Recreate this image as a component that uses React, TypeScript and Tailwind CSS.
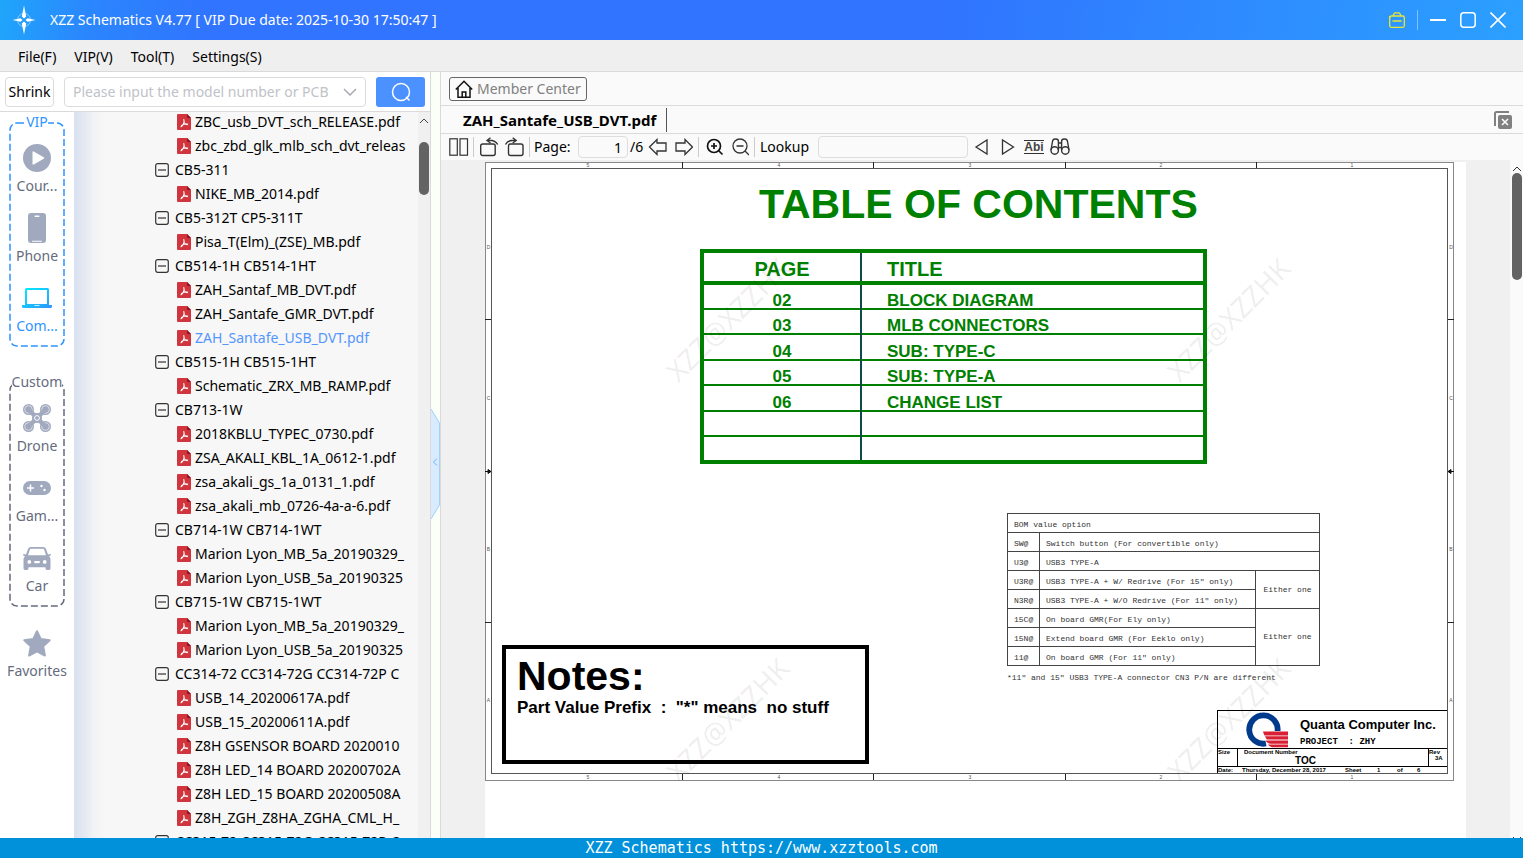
import { useState } from 'react';
import type { ReactNode } from 'react';
import clsx from 'clsx';

interface TreeFile {
  name: string;
}

interface TreeFolder {
  name: string;
  files: TreeFile[];
}

const toFiles = (...names: string[]): TreeFile[] => names.map((name) => ({ name }));

// the first folder is scrolled out of view, only its files are listed
const topFiles = toFiles('ZBC_usb_DVT_sch_RELEASE.pdf', 'zbc_zbd_glk_mlb_sch_dvt_releas');

const folders: TreeFolder[] = [
  { name: 'CB5-311', files: toFiles('NIKE_MB_2014.pdf') },
  { name: 'CB5-312T CP5-311T', files: toFiles('Pisa_T(Elm)_(ZSE)_MB.pdf') },
  {
    name: 'CB514-1H CB514-1HT',
    files: toFiles('ZAH_Santaf_MB_DVT.pdf', 'ZAH_Santafe_GMR_DVT.pdf', 'ZAH_Santafe_USB_DVT.pdf'),
  },
  { name: 'CB515-1H CB515-1HT', files: toFiles('Schematic_ZRX_MB_RAMP.pdf') },
  {
    name: 'CB713-1W',
    files: toFiles(
      '2018KBLU_TYPEC_0730.pdf',
      'ZSA_AKALI_KBL_1A_0612-1.pdf',
      'zsa_akali_gs_1a_0131_1.pdf',
      'zsa_akali_mb_0726-4a-a-6.pdf',
    ),
  },
  {
    name: 'CB714-1W CB714-1WT',
    files: toFiles('Marion Lyon_MB_5a_20190329_', 'Marion Lyon_USB_5a_20190325'),
  },
  {
    name: 'CB715-1W CB715-1WT',
    files: toFiles('Marion Lyon_MB_5a_20190329_', 'Marion Lyon_USB_5a_20190325'),
  },
  {
    name: 'CC314-72 CC314-72G CC314-72P C',
    files: toFiles(
      'USB_14_20200617A.pdf',
      'USB_15_20200611A.pdf',
      'Z8H GSENSOR BOARD 2020010',
      'Z8H LED_14 BOARD 20200702A',
      'Z8H LED_15 BOARD 20200508A',
      'Z8H_ZGH_Z8HA_ZGHA_CML_H_',
    ),
  },
  { name: 'CC315-72 CC315-72G CC315-72P C', files: [] },
];

const tocRows = [
  ['02', 'BLOCK DIAGRAM'],
  ['03', 'MLB CONNECTORS'],
  ['04', 'SUB: TYPE-C'],
  ['05', 'SUB: TYPE-A'],
  ['06', 'CHANGE LIST'],
  ['', ''],
  ['', ''],
];

const bomRows = [
  { code: 'SW@', text: 'Switch button (For convertible only)', wide: true },
  { code: 'U3@', text: 'USB3 TYPE-A', wide: true },
  { code: 'U3R@', text: 'USB3 TYPE-A + W/ Redrive (For 15" only)', span: 2 },
  { code: 'N3R@', text: 'USB3 TYPE-A + W/O Redrive (For 11" only)' },
  { code: '15C@', text: 'On board GMR(For Ely only)', span: 3 },
  { code: '15N@', text: 'Extend board GMR (For Eeklo only)' },
  { code: '11@', text: 'On board GMR (For 11" only)' },
];

/* ---------- icons ---------- */

function AppLogo() {
  return (
    <svg width="24" height="30" viewBox="0 0 24 30" fill="#fff">
      <circle cx="12" cy="15" r="6.5" fill="none" stroke="#fff" strokeOpacity=".45" />
      <path d="M12 0.5 14.2 11.5 12 13.5 9.8 11.5Z" />
      <path d="M12 29.5 14.2 18.5 12 16.5 9.8 18.5Z" />
      <path d="M0.5 15 8.5 13.3 10.5 15 8.5 16.7Z" />
      <path d="M23.5 15 15.5 13.3 13.5 15 15.5 16.7Z" />
    </svg>
  );
}

function PdfIcon() {
  return (
    <svg width="14" height="16" viewBox="0 0 14 16" className="shrink-0">
      <path d="M1 0h9l4 4v11a1 1 0 0 1-1 1H1a1 1 0 0 1-1-1V1a1 1 0 0 1 1-1Z" fill="#d0343d" />
      <path d="M10 0v3a1 1 0 0 0 1 1h3Z" fill="#8f1119" />
      <path
        d="M6.800 5.500c.6 1.500.3 3.200-.4 4.500-.7 1.300-1.500 2.300-2.400 2.700M4.500 11.500c1.500-1 4-1.700 6.200-1.500M6.900 8.200c.8 1.200 1.800 2.200 3.300 2.600"
        fill="none"
        stroke="#fff"
        strokeWidth="1.100"
        strokeLinecap="round"
      />
    </svg>
  );
}

function CourseIcon() {
  return (
    <svg width="28" height="28" viewBox="0 0 28 28">
      <circle cx="14" cy="14" r="14" fill="#a1a9bf" />
      <path d="M9.500 8.200v11.600c0 .8.500 1.200 1.200.8l10-5.800c.6-.4.6-1.200 0-1.600l-10-5.800c-.7-.4-1.200 0-1.200.8Z" fill="#fff" />
    </svg>
  );
}

function PhoneIcon() {
  return (
    <svg width="18" height="30" viewBox="0 0 18 30">
      <rect width="18" height="30" rx="3" fill="#a1a9bf" />
      <rect x="6.500" y="2.500" width="5" height="1.500" rx=".7" fill="#fff" />
      <rect x="4" y="27.700" width="10" height="1" rx=".5" fill="#fff" />
    </svg>
  );
}

function ComputerIcon() {
  return (
    <svg width="30" height="20" viewBox="0 0 30 20">
      <defs>
        <linearGradient id="screen" x1="0" x2="1" y1="0" y2="1">
          <stop offset="0" stopColor="#00efff" />
          <stop offset="1" stopColor="#2e94ff" />
        </linearGradient>
      </defs>
      <path
        fillRule="evenodd"
        fill="url(#screen)"
        d="M4.500 0h21A1.500 1.500 0 0 1 27 1.500V17h3v1.500c0 1-1 1.500-1.500 1.500h-27C1 20 0 19.500 0 18.500V17h3V1.500A1.500 1.500 0 0 1 4.500 0ZM5 2v14h20V2Z"
      />
      <rect x="12.500" y="17" width="5" height="1" fill="#bdf3ff" />
    </svg>
  );
}

function DroneIcon() {
  const rotors = [
    [5.5, 5.5],
    [22.5, 5.5],
    [5.5, 22.5],
    [22.5, 22.5],
  ];
  return (
    <svg width="28" height="28" viewBox="0 0 28 28">
      {rotors.map(([cx, cy]) => (
        <g key={`${cx}-${cy}`}>
          <circle cx={cx} cy={cy} r="5.500" fill="#a1a9bf" />
          <circle cx={cx} cy={cy} r="3.800" fill="none" stroke="#fff" strokeWidth=".7" strokeOpacity=".8" />
        </g>
      ))}
      <path d="M6 6 22 22M22 6 6 22" stroke="#a1a9bf" strokeWidth="4.500" strokeLinecap="round" />
      <circle cx="14" cy="14" r="5" fill="#a1a9bf" />
      <circle cx="14" cy="14" r="2.400" fill="none" stroke="#fff" strokeWidth="1" />
    </svg>
  );
}

function GameIcon() {
  return (
    <svg width="28" height="14" viewBox="0 0 28 14">
      <rect width="28" height="14" rx="7" fill="#a1a9bf" />
      <path d="M7.500 3.500v7M4 7h7" stroke="#fff" strokeWidth="1.500" />
      <circle cx="18.500" cy="5" r="1.200" fill="#fff" />
      <circle cx="21.500" cy="9" r="1.200" fill="#fff" />
    </svg>
  );
}

function CarIcon() {
  return (
    <svg width="28" height="23" viewBox="0 0 28 23">
      <path
        fillRule="evenodd"
        fill="#a1a9bf"
        d="M8 0h12c1.500 0 2.500.8 3 2l2 5.500L27.300 7c.7 0 .9 1.300.2 1.600l-1.500.6c1 1 1.500 2 1.500 3.300V21c0 1-.5 2-1.500 2h-2c-1 0-1.500-.8-1.500-2v-.8h-17V21c0 1.200-.5 2-1.500 2H2c-1 0-1.500-1-1.500-2v-8.500C.5 11.200 1 10.200 2 9.200l-1.500-.6C-.2 8.300 0 7 .7 7L3 7.500 5 2c.5-1.200 1.500-2 3-2Zm.2 1.800c-.8 0-1.200.4-1.500 1.200L5 8.300h18L21.300 3c-.3-.8-.7-1.200-1.500-1.200ZM6.300 13a1.900 1.900 0 1 0 0 3.800 1.900 1.900 0 0 0 0-3.800Zm15.400 0a1.900 1.900 0 1 0 0 3.800 1.900 1.900 0 0 0 0-3.800ZM12 14c-1.200 0-1.200 2.200 0 2.200h4c1.200 0 1.200-2.200 0-2.200Z"
      />
    </svg>
  );
}

function StarIcon() {
  return (
    <svg width="28" height="27" viewBox="0 0 28 27">
      <path
        d="M14 1.200 17.700 8.900 26.700 10.200 20.200 16.200 21.900 25.500 14 21.400 6.100 25.500 7.800 16.200 1.300 10.200 10.300 8.900Z"
        fill="#a1a9bf"
        stroke="#a1a9bf"
        strokeWidth="2"
        strokeLinejoin="round"
      />
    </svg>
  );
}

function QuantaLogo() {
  return (
    <svg width="42" height="36" viewBox="0 0 42 36" className="shrink-0">
      <path d="M31.500 19.500A14.200 14.200 0 1 0 20 31.500" fill="none" stroke="#003a8c" strokeWidth="5.800" />
      <path d="M16 19h27v17H24Z" fill="#fff" />
      <path
        d="M17 19.500h25v4H18.500C17.800 22 17.300 21 17 19.500ZM19 24.300h23v3.200H21C20 26.500 19.500 25.500 19 24.300ZM19.500 28.500H42v3.200H24.500c-2 0-4-1.500-5-3.200ZM22 32.500h20v2.800H26c-1.500-.5-3-1.500-4-2.800Z"
        fill="#d81f33"
      />
    </svg>
  );
}

/* ---------- title bar and menu ---------- */

function TitleBar() {
  return (
    <header className="flex h-10 shrink-0 items-center bg-[linear-gradient(100deg,#1fa6fb_0%,#2b86fd_6%,#3074ff_14%,#3074ff_62%,#2e8cff_82%,#2ba0ff_100%)] pl-3 pr-[17px] text-white">
      <AppLogo />
      <h1 className="ml-3.5 text-sm leading-[22px]">XZZ Schematics V4.77 [ VIP Due date: 2025-10-30 17:50:47 ]</h1>
      <div className="ml-auto flex items-center">
        <button type="button" aria-label="Toolbox">
          <svg width="16" height="16" viewBox="0 0 16 16" fill="none" stroke="#e9e337" strokeWidth="1.300">
            <rect x=".7" y="4" width="14.600" height="11.300" rx="1.500" />
            <path d="M.7 7V4M4 4 5 1.700c.2-.6.600-.9 1.200-.9h3.600c.6 0 1 .3 1.200.9L12 4M3.500 9h9" />
          </svg>
        </button>
        <span className="mx-3 h-5 w-px bg-white/40" />
        <button type="button" aria-label="Minimize">
          <svg width="16" height="16" stroke="#fff" strokeWidth="2">
            <path d="M0 8h16" />
          </svg>
        </button>
        <button type="button" aria-label="Maximize" className="ml-3.5">
          <svg width="16" height="16" fill="none" stroke="#fff" strokeWidth="1.500">
            <rect x=".8" y=".8" width="14.400" height="14.400" rx="3" />
          </svg>
        </button>
        <button type="button" aria-label="Close" className="ml-3.5">
          <svg width="16" height="16" stroke="#fff" strokeWidth="1.600">
            <path d="M.5.5l15 15M15.500.5l-15 15" />
          </svg>
        </button>
      </div>
    </header>
  );
}

function MenuBar() {
  return (
    <nav className="flex h-8 shrink-0 items-center gap-[18px] border-b border-[#dadada] bg-[#efefef] px-[18px] pt-0.5 text-sm">
      {['File(F)', 'VIP(V)', 'Tool(T)', 'Settings(S)'].map((label) => (
        <button key={label} type="button">
          {label}
        </button>
      ))}
    </nav>
  );
}

/* ---------- left panel ---------- */

function SearchRow() {
  return (
    <form className="flex h-10 shrink-0 items-center border-b border-[#dadada] bg-white px-[5px] text-sm">
      <button type="button" className="h-[30px] w-[49px] rounded border border-[#dcdcdc] bg-white">
        Shrink
      </button>
      <div className="ml-2.5 flex h-[30px] min-w-0 flex-1 items-center rounded border border-[#dcdcdc] bg-white px-2">
        <input
          type="text"
          aria-label="Model number or PCB number"
          placeholder="Please input the model number or PCB"
          className="min-w-0 flex-1 outline-none placeholder:text-[#bfc2c9]"
        />
        <button type="button" aria-label="Show history" className="ml-1.5">
          <svg width="14" height="8" fill="none" stroke="#a8abb2" strokeWidth="1.500">
            <path d="M1 1l6 6 6-6" />
          </svg>
        </button>
      </div>
      <button
        type="submit"
        aria-label="Search"
        className="ml-2.5 flex h-[30px] w-[49px] items-center justify-center rounded-[3px] bg-[#4b91ff]"
      >
        <svg width="20" height="20" fill="none" stroke="#fff" strokeWidth="1.500">
          <circle cx="10" cy="10" r="8.500" />
          <path d="M15 15l3.500 3.500" />
        </svg>
      </button>
    </form>
  );
}

interface RailItemProps {
  icon: ReactNode;
  label: string;
  active?: boolean;
}

function RailItem({ icon, label, active }: RailItemProps) {
  return (
    <button type="button" className={clsx('flex h-[70px] w-full flex-col items-center', active ? 'text-[#2e94ff]' : 'text-[#666b7d]')}>
      <span className="flex h-10 items-center">{icon}</span>
      <span className="whitespace-nowrap leading-4">{label}</span>
    </button>
  );
}

function RailGroup({ label, color, children }: { label: string; color: string; children: ReactNode }) {
  return (
    <section className="relative h-[225px] w-14 pt-4" style={{ color }}>
      <svg width="100%" height="100%" className="absolute inset-0 overflow-visible" fill="none">
        <rect x="1" y="1" width="54" height="223" rx="7" stroke={color} strokeWidth="1.500" strokeDasharray="7 3" />
      </svg>
      <h2 className="absolute inset-x-0 -top-2 flex justify-center leading-4">
        <span className="whitespace-nowrap bg-white">{label}</span>
      </h2>
      <div className="relative">{children}</div>
    </section>
  );
}

function Rail() {
  return (
    <aside className="flex w-[74px] shrink-0 flex-col items-center bg-white pt-2.5 text-sm">
      <RailGroup label="VIP" color="#2e94ff">
        <RailItem icon={<CourseIcon />} label="Cour..." />
        <RailItem icon={<PhoneIcon />} label="Phone" />
        <RailItem icon={<ComputerIcon />} label="Com..." active />
      </RailGroup>
      <div className="h-[35px] shrink-0" />
      <RailGroup label="Custom" color="#666b7d">
        <RailItem icon={<DroneIcon />} label="Drone" />
        <RailItem icon={<GameIcon />} label="Gam..." />
        <RailItem icon={<CarIcon />} label="Car" />
      </RailGroup>
      <div className="mt-4 w-full">
        <RailItem icon={<StarIcon />} label="Favorites" />
      </div>
    </aside>
  );
}

function FileRow({ file, selected, onSelect }: { file: TreeFile; selected: boolean; onSelect: (name: string) => void }) {
  return (
    <li className="pl-[22px]">
      <button
        type="button"
        onClick={() => onSelect(file.name)}
        className={clsx('flex h-6 items-center gap-1 whitespace-nowrap', selected && 'text-[#5496ff]')}
      >
        <PdfIcon />
        {file.name}
      </button>
    </li>
  );
}

function FileTree() {
  const [selected, setSelected] = useState('ZAH_Santafe_USB_DVT.pdf');

  return (
    <div className="min-w-0 flex-1 overflow-hidden bg-[linear-gradient(90deg,#d9e1f0_0px,#e4e8f1_10px,#f2f3f5_20px,#f7f7f7_32px)] pl-[81px] text-sm leading-[22px]">
      <ul className="-mt-0.5">
        {topFiles.map((file) => (
          <FileRow key={file.name} file={file} selected={file.name === selected} onSelect={setSelected} />
        ))}
        {folders.map((folder) => (
          <li key={folder.name}>
            <button type="button" className="flex h-6 items-center gap-1.5 whitespace-nowrap">
              <svg width="14" height="14" fill="none" stroke="#333" className="shrink-0">
                <rect x=".7" y=".7" width="12.600" height="12.600" rx="2" strokeWidth="1.200" />
                <path d="M3 7h8" strokeWidth="1.200" />
              </svg>
              {folder.name}
            </button>
            <ul>
              {folder.files.map((file) => (
                <FileRow key={file.name} file={file} selected={file.name === selected} onSelect={setSelected} />
              ))}
            </ul>
          </li>
        ))}
      </ul>
    </div>
  );
}

function LeftPanel() {
  return (
    <div className="flex w-[430px] shrink-0 flex-col">
      <SearchRow />
      <div className="flex min-h-0 flex-1">
        <Rail />
        <FileTree />
        <div className="flex w-3 shrink-0 flex-col items-center bg-[#f0f0f0] pt-1.5">
          <svg width="10" height="6" fill="none" stroke="#444">
            <path d="M1 5l4-4 4 4" />
          </svg>
          <span className="mt-[18px] h-[53px] w-2.5 rounded-full bg-[#636363]" />
        </div>
      </div>
    </div>
  );
}

function Splitter() {
  return (
    <div className="flex w-[11px] shrink-0 items-center border-x border-[#dadada] bg-[#fafff8]">
      <button type="button" aria-label="Collapse panel" className="mt-[18px]">
        <svg width="9" height="110" fill="none">
          <path d="M0 0 9 14v82L0 110Z" fill="#d8ebff" />
          <path d="M0 0 8.500 14v82L0 110" stroke="#a5d0fa" />
          <path d="M6 49.500l-3.500 3.500 3.500 3.500" stroke="#6fb6f5" />
        </svg>
      </button>
    </div>
  );
}

/* ---------- viewer ---------- */

function ToolButton({ label, children }: { label: string; children: ReactNode }) {
  return (
    <button type="button" aria-label={label} title={label} className="shrink-0">
      {children}
    </button>
  );
}

const Divider = () => <span className="h-5 w-px shrink-0 bg-[#ccc]" />;

function Toolbar() {
  const [page, setPage] = useState('1');

  return (
    <div className="flex h-[26px] shrink-0 items-center bg-[#fafafa] pl-2 text-sm">
      <ToolButton label="Two pages">
        <svg width="20" height="18" fill="none" stroke="#333" strokeWidth="1.200">
          <rect x=".8" y=".8" width="7.500" height="16.400" />
          <rect x="11" y=".8" width="7.500" height="16.400" />
        </svg>
      </ToolButton>
      <div className="flex items-center gap-[5px] pl-1">
        <Divider />
        <ToolButton label="Rotate left">
          <svg width="20" height="20" fill="none" stroke="#333" strokeWidth="1.400">
            <rect x="1.700" y="7" width="14.500" height="11.500" rx="2" />
            <path d="M18.700 7.500c-1.500-3-5-4.700-10.500-4.200M11.500.7 8 3.400l3.500 2.600" />
          </svg>
        </ToolButton>
        <ToolButton label="Rotate right">
          <svg width="20" height="20" fill="none" stroke="#333" strokeWidth="1.400">
            <rect x="4.500" y="7" width="14.500" height="11.500" rx="2" />
            <path d="M1.500 7.500c1.500-3 5-4.700 10.500-4.200M8.700.7l3.500 2.700L8.700 6" />
          </svg>
        </ToolButton>
        <Divider />
      </div>
      <label htmlFor="page" className="w-12 pl-1">
        Page:
      </label>
      <input
        id="page"
        value={page}
        onChange={(e) => setPage(e.target.value)}
        className="h-[22px] w-[50px] rounded-sm border border-[#dedede] px-[5px] text-right outline-none"
      />
      <span className="w-4 pl-0.5">/6</span>
      <div className="flex items-center gap-[5px] pl-1">
        <ToolButton label="Previous page">
          <svg width="20" height="18" fill="none" stroke="#333" strokeWidth="1.300">
            <path d="M1.500 9 9 1.500V5h9v8H9v3.500Z" />
          </svg>
        </ToolButton>
        <ToolButton label="Next page">
          <svg width="20" height="18" fill="none" stroke="#333" strokeWidth="1.300">
            <path d="M19.500 9 12 1.500V5H3v8h9v3.500Z" />
          </svg>
        </ToolButton>
        <Divider />
        <ToolButton label="Zoom in">
          <svg width="20" height="18" fill="none" stroke="#111" strokeWidth="1.700">
            <circle cx="10" cy="8" r="6.500" />
            <path d="M14.500 12.500l4 4M7 8h6M10 5v6" />
          </svg>
        </ToolButton>
        <ToolButton label="Zoom out">
          <svg width="20" height="18" fill="none" stroke="#333" strokeWidth="1.300">
            <circle cx="11" cy="8" r="7" />
            <path d="M16 13l4 4M7.500 8h7" />
          </svg>
        </ToolButton>
        <Divider />
      </div>
      <label htmlFor="lookup" className="w-[63px] pl-[5px]">
        Lookup
      </label>
      <input id="lookup" className="h-[22px] w-[150px] rounded-sm border border-[#dedede] px-1.5 outline-none" />
      <div className="flex items-center gap-1.5 pl-1">
        <ToolButton label="Find previous">
          <svg width="20" height="18" fill="none" stroke="#333" strokeWidth="1.300">
            <path d="M4 9l11-7v14Z" />
          </svg>
        </ToolButton>
        <ToolButton label="Find next">
          <svg width="20" height="18" fill="none" stroke="#333" strokeWidth="1.300">
            <path d="M15.500 9 4.500 2v14Z" />
          </svg>
        </ToolButton>
        <ToolButton label="Match whole word">
          <span className="block w-5 border-y border-[#333] text-center font-['Liberation_Sans'] text-xs font-bold leading-3 text-[#444]">
            Abi
          </span>
        </ToolButton>
        <ToolButton label="Find all">
          <svg width="20" height="18" fill="none" stroke="#333" strokeWidth="1.400">
            <circle cx="4.700" cy="12.500" r="3.700" />
            <circle cx="15.300" cy="12.500" r="3.700" />
            <path d="M1 12 2.500 3.500c.3-1.800 1-2.500 2.500-2.500h1c1.600 0 2.400.7 2.400 2.200V12M19 12l-1.500-8.500C17.200 1.700 16.500 1 15 1h-1c-1.600 0-2.400.7-2.400 2.200V12M8.400 5h3.200M8.400 9.500h3.200" />
          </svg>
        </ToolButton>
      </div>
    </div>
  );
}

// zone marks, frame lines and watermarks of the drawing sheet
function SheetFrame() {
  const columns = [197.5, 388.5, 580.5, 771.5];
  const rows = [157.5, 460.5];
  return (
    <svg width="969" height="619" className="pointer-events-none absolute left-0 top-0" fill="none" stroke="#555">
      <rect x=".5" y=".5" width="968" height="618" stroke="#888" />
      <rect x="6.500" y="6.500" width="956" height="605" />
      {columns.map((x) => (
        <path key={x} d={`M${x} 0v6M${x} 612v6`} stroke="#222" />
      ))}
      {rows.map((y) => (
        <path key={y} d={`M0 ${y}h6M963 ${y}h6`} stroke="#222" />
      ))}
      <path d="M0 309.500h6M963 309.500h6M6 309.500l-3-2v4ZM963 309.500l3-2v4Z" stroke="#111" fill="#111" />
      <g fill="#555" stroke="none" fontSize="5" textAnchor="middle" fontFamily="Liberation Sans">
        {['5', '4', '3', '2', '1'].map((n, i) => (
          <g key={n}>
            <text x={103 + i * 191} y="5">{n}</text>
            <text x={103 + i * 191} y="617">{n}</text>
          </g>
        ))}
        {['D', 'C', 'B', 'A'].map((n, i) => (
          <g key={n}>
            <text x="3.500" y={87 + i * 151}>{n}</text>
            <text x="966" y={87 + i * 151}>{n}</text>
          </g>
        ))}
      </g>
      <g fill="#000" fillOpacity=".08" stroke="none" fontSize="28" textAnchor="middle" fontFamily="Noto Sans">
        {[
          [250, 165],
          [751, 165],
          [250, 565],
          [751, 565],
        ].map(([x, y]) => (
          <text key={`${x}-${y}`} transform={`translate(${x} ${y}) rotate(-45)`}>
            XZZ@XZZHK
          </text>
        ))}
      </g>
    </svg>
  );
}

function ContentsTable() {
  return (
    <table className="ml-[215px] w-[507px] border-collapse border-4 border-[#008000] font-bold text-[#008000]">
      <thead>
        <tr className="h-8 border-b-4 border-[#008000] text-xl leading-6">
          <th className="w-[159px] border-r-2 border-[#0d4a4a] p-0 pt-1">PAGE</th>
          <th className="p-0 pl-[25px] pt-1 text-left">TITLE</th>
        </tr>
      </thead>
      <tbody className="text-[17px] leading-[15px]">
        {tocRows.map(([page, title], i) => (
          <tr key={i} className="border-t-2 border-[#008000] align-bottom odd:h-[26px] even:h-[25px]">
            <td className="border-r-2 border-[#0d4a4a] p-0 text-center">{page}</td>
            <td className="p-0 pl-[25px]">{title}</td>
          </tr>
        ))}
      </tbody>
    </table>
  );
}

function BomTable() {
  return (
    <table className="w-[313px] table-fixed border-collapse border border-[#444] text-[8px] leading-3 text-[#333]">
      <colgroup>
        <col className="w-8" />
        <col />
        <col className="w-16" />
      </colgroup>
      <tbody>
        <tr className="h-[19px] border-b border-[#444]">
          <td colSpan={3} className="p-0 pl-1.5 pt-[3px]">
            BOM value option
          </td>
        </tr>
        {bomRows.map((row) => (
          <tr key={row.code} className="h-[19px]">
            <td className="border border-[#444] p-0 pl-1.5 pt-[3px]">{row.code}</td>
            <td colSpan={row.wide ? 2 : 1} className="whitespace-nowrap border border-[#444] p-0 pl-1.5 pt-[3px]">
              {row.text}
            </td>
            {row.span && (
              <td rowSpan={row.span} className="border border-[#444] p-0 text-center">
                Either one
              </td>
            )}
          </tr>
        ))}
      </tbody>
    </table>
  );
}

function TitleBlock() {
  return (
    <div className="w-[231px] border border-black text-[6px] font-bold leading-[6px] text-black">
      <div className="flex h-[37px] items-end pl-7">
        <QuantaLogo />
        <div className="ml-3">
          <div className="whitespace-nowrap text-[13px] leading-[22px]">Quanta Computer Inc.</div>
          <div className="whitespace-pre font-['Liberation_Mono'] text-[9px] leading-3">PROJECT  : ZHY</div>
        </div>
      </div>
      <div className="flex h-[19px] border-y border-black">
        <div className="w-5 border-r border-black">Size</div>
        <div className="flex-1 pl-1.5">
          Document Number
          <div className="pl-[51px] text-[10px] leading-3">TOC</div>
        </div>
        <div className="w-[19px] border-l border-black">
          Rev
          <div className="pl-1.5">3A</div>
        </div>
      </div>
      <div className="flex h-[6px] whitespace-nowrap">
        <span className="w-6">Date:</span>
        <span className="w-[103px]">Thursday, December 28, 2017</span>
        <span className="w-8">Sheet</span>
        <span className="w-5">1</span>
        <span className="w-5">of</span>
        <span>6</span>
      </div>
    </div>
  );
}

function Sheet() {
  return (
    <article className="relative w-[981px] shrink-0 bg-white font-['Liberation_Sans',Arial,sans-serif]">
      <h2 className="pl-[274px] pt-[18px] text-[41px] font-bold leading-[48px] text-[#008000]">TABLE OF CONTENTS</h2>
      <div className="pt-[21px]">
        <ContentsTable />
      </div>
      <div className="flex items-end justify-between pl-[17px] pr-[18px] pt-[49px]">
        <section className="mb-2.5 h-[119px] w-[367px] border-4 border-black px-[11px] pt-[5px] text-black">
          <h3 className="text-[41px] font-bold leading-[44px]">Notes:</h3>
          <p className="whitespace-pre text-[17px] font-bold leading-5">{'Part Value Prefix  :  "*" means  no stuff'}</p>
        </section>
        <section className="flex flex-col items-end">
          <div className="mr-[128px] font-['Liberation_Mono','Courier_New',monospace]">
            <BomTable />
            <p className="pt-1.5 text-[8px] leading-3 text-[#333]">*11" and 15" USB3 TYPE-A connector CN3 P/N are different</p>
          </div>
          <div className="pt-[26px]">
            <TitleBlock />
          </div>
        </section>
      </div>
      <SheetFrame />
    </article>
  );
}

function Viewer() {
  return (
    <main className="flex min-w-0 flex-1 flex-col bg-[#fafafa]">
      <div className="flex h-[34px] shrink-0 items-center border-b border-[#dadada] px-2 text-sm">
        <button type="button" className="flex h-6 items-center gap-1 rounded-[3px] border border-[#666] px-[5px] text-[#808080]">
          <svg width="18" height="18" fill="none" stroke="#111" strokeWidth="1.500">
            <path d="M.8 9.500 9 1.300l8.200 8.200M3 8v9.200h12V8M7.200 17v-5h3.600v5" />
          </svg>
          Member Center
        </button>
      </div>
      <div className="flex h-7 shrink-0 items-center border-b border-[#dadada] pl-[22px] pr-[11px] text-[15px] leading-5">
        <button type="button" className="h-6 border-r border-[#555] pr-2.5 font-bold">
          ZAH_Santafe_USB_DVT.pdf
        </button>
        <button type="button" aria-label="Close all tabs" className="ml-auto">
          <svg width="18" height="18" fill="none" stroke="#808080" strokeWidth="2">
            <path d="M1 15V2.500C1 1.700 1.700 1 2.500 1H15" />
            <rect x="4" y="4" width="14" height="14" rx="2" fill="#808080" stroke="none" />
            <path d="M8 8l6 6M14 8l-6 6" stroke="#fff" strokeWidth="1.500" />
          </svg>
        </button>
      </div>
      <Toolbar />
      <div className="flex min-h-0 flex-1">
        <div className="flex min-w-0 flex-1 justify-center overflow-hidden bg-[#f0f0f0] pt-0.5">
          <Sheet />
        </div>
        <div className="flex w-[13px] shrink-0 flex-col items-center bg-[#fafafa] pt-1.5">
          <svg width="10" height="6" fill="none" stroke="#333">
            <path d="M1 5l4-4 4 4" />
          </svg>
          <span className="mt-px h-[107px] w-2.5 rounded-full bg-[#636363]" />
          <svg width="10" height="6" fill="none" stroke="#333" className="-mb-1 mt-auto">
            <path d="M1 1l4 4 4-4" />
          </svg>
        </div>
      </div>
    </main>
  );
}

export default function App() {
  return (
    <div className="flex h-screen flex-col overflow-hidden bg-white font-['Noto_Sans','Noto_Sans_CJK_SC',sans-serif] text-black">
      <TitleBar />
      <MenuBar />
      <div className="flex min-h-0 flex-1">
        <LeftPanel />
        <Splitter />
        <Viewer />
      </div>
      <footer className="h-5 shrink-0 bg-[#0091da] text-center font-['DejaVu_Sans_Mono',monospace] text-[15px] leading-5 text-white">
        XZZ Schematics https://www.xzztools.com
      </footer>
    </div>
  );
}
